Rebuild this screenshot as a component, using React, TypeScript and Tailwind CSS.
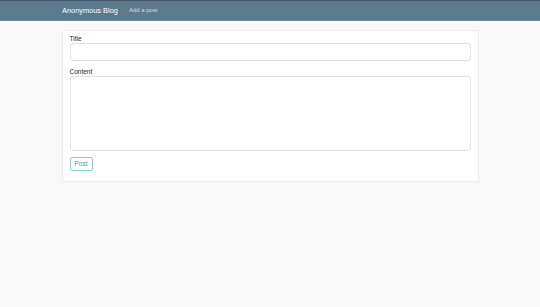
export default function App() {
  return (
    <div
      className="min-h-[307px] bg-[#f8f8f8]"
      style={{ fontFamily: '"Liberation Sans", Arial, sans-serif' }}
    >
      {/* Navbar */}
      <nav className="h-[21px] bg-[#5b7a8c] border-t border-[#48586a] border-b border-b-[#6e8a9a] flex items-center">
        <div className="w-[416px] mx-auto flex items-center gap-[11px]">
          <span className="text-[7.4px] text-white">Anonymous Blog</span>
          <span className="text-[6px] text-[#d5dde3]">Add a post</span>
        </div>
      </nav>

      {/* Form card */}
      <div className="w-[417px] mx-auto mt-[9px] bg-white border border-[#ececec] rounded-[2px] px-[7px] pt-[4px] pb-[10px]">
        <label className="block text-[6.5px] text-[#222] leading-[8px]">Title</label>
        <input className="block w-full h-[18px] border border-[#e2e2e2] rounded-[3px] bg-white outline-none" />
        <label className="block text-[6.5px] text-[#222] leading-[8px] mt-[7px]">Content</label>
        <textarea className="block w-full h-[75px] border border-[#e2e2e2] rounded-[3px] bg-white outline-none resize-none" />
        <button className="block mt-[6px] h-[14px] w-[23px] border border-[#7fd0de] rounded-[2px] text-[6.5px] leading-none text-[#1aa3bd] bg-white">
          Post
        </button>
      </div>
    </div>
  );
}
